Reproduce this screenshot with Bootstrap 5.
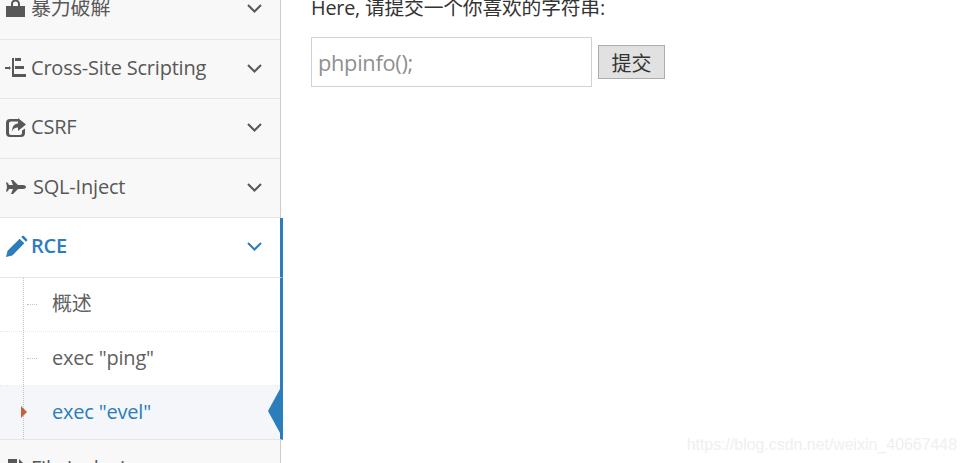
<!DOCTYPE html>
<html>
    <head>
        <meta charset="utf-8">
        <link href="https://cdn.jsdelivr.net/npm/bootstrap@5.3.1/dist/css/bootstrap.min.css" rel="stylesheet"/>
        <style>
            html, body { height: 100%; overflow: hidden; }
            body { font-family: "Open Sans", "Noto Sans CJK SC", sans-serif; color: #333; background: #fff; }
            .page-wrap { height: 463px; overflow: hidden; }
            .side-menu { width: 281px; height: 483px; background: #f8f8f8; border-right: 1px solid #ccc; flex-shrink: 0; margin-top: -20px; }
            .menu-head { height: 59.5px; border-bottom: 1px solid #e5e5e5; color: #585858; font-size: 20px; letter-spacing: -.2px; padding: 0 17px 1px 6px; }
            .menu-head span { margin-bottom: 1px; }
            .menu-head svg.ico { width: 20px; height: 20px; flex-shrink: 0; fill: #585858; margin-right: 5px; overflow: visible; }
            .menu-head svg.chev { width: 17px; height: 11px; fill: none; stroke: #585858; stroke-width: 2; margin-left: auto; }
            .open-head { background: #fff; color: #2b7dbc; font-weight: 600; width: 283px; border-right: 3px solid #2b7dbc; }
            .open-head svg.ico { fill: #2b7dbc; width: 21px; height: 21px; margin-right: 4px; }
            .open-head svg.chev { stroke: #2b7dbc; }
            .sub-menu { width: 283px; background: #fff; border-right: 3px solid #2b7dbc; border-bottom: 1px solid #e5e5e5; position: relative; }
            .sub-row { height: 54px; padding: 0 0 1px 52px; color: #616161; font-size: 20px; letter-spacing: -.2px; border-bottom: 1px dotted #e8e8e8; position: relative; }
            .sub-current { height: 53px; border-bottom: 0; background: #f4f6f9; color: #2b7dbc; padding-bottom: 0; }
            .tree-line { position: absolute; left: 23px; top: 0; bottom: 0; border-left: 1px dotted #c4c4c4; z-index: 1; }
            .tree-dash { position: absolute; left: 27px; top: 26px; width: 10px; border-top: 1px dotted #c4c4c4; }
            .tree-mark { position: absolute; left: 21px; top: 20px; border-left: 6px solid #c86139; border-top: 6px solid transparent; border-bottom: 6px solid transparent; z-index: 2; }
            .side-arrow { position: absolute; right: 0; top: 111px; border-right: 12px solid #2b7dbc; border-top: 22px solid transparent; border-bottom: 22px solid transparent; }
            .main-area { padding: 0 0 0 30px; margin-top: -6px; }
            .intro-line { font-size: 19.8px; letter-spacing: -.2px; line-height: 28px; margin: 0 0 15px; color: #333; }
            .text-box { width: 281px; height: 50px; border: 1px solid #d2d2d2; padding: 0 6px; font: 21.8px "Open Sans", sans-serif; letter-spacing: -.3px; outline: 0; }
            .text-box::placeholder { color: #8f8f8f; opacity: 1; }
            .send-btn { width: 67px; height: 34px; margin-left: 6px; margin-bottom: 8px; background: #e1e1e1; border: 1px solid #adadad; border-radius: 0; padding: 0; font: 20px "Noto Sans CJK SC", sans-serif; color: #333; }
            .water-mark { position: absolute; right: 9px; bottom: 9px; font: 15.9px "Liberation Sans", sans-serif; color: #efefef; }
        </style>
    </head>
    <body>
        <div class="page-wrap d-flex position-relative">
            <div class="side-menu">
                <div class="menu-head d-flex align-items-center">
                    <svg class="ico" viewBox="0 0 20 20"><path d="M0 7h19v11H0zM5 7V5a4.500 4.500 0 0 1 9 0v2h-2V5a2.500 2.500 0 0 0-5 0v2z"/></svg>
                    <span>暴力破解</span>
                    <svg class="chev" viewBox="0 0 17 11"><path d="M2 2l6.500 6.500L15 2"/></svg>
                </div>
                <div class="menu-head d-flex align-items-center">
                    <svg class="ico" viewBox="0 0 20 20"><path d="M-1 9h4V8l2 2-2 2v-1h-4zM6 0h2v19H6zM9 0h6v3H9zM9 8h9v3H9zM6 16h14v3H6z"/></svg>
                    <span>Cross-Site Scripting</span>
                    <svg class="chev" viewBox="0 0 17 11"><path d="M2 2l6.500 6.500L15 2"/></svg>
                </div>
                <div class="menu-head d-flex align-items-center">
                    <svg class="ico" viewBox="0 0 20 20"><path d="M4 1h9v2.500H5a2 2 0 0 0-2 2V15a2 2 0 0 0 2 2h9a2 2 0 0 0 2-2v-2.500l3-2V15a4 4 0 0 1-4 4H4a4 4 0 0 1-4-4V5a4 4 0 0 1 4-4z"/><path d="M12 0l8 6.500-8 6.500V9.500c-3 0-5 1-6 4 0-5 2-7.500 6-8z"/></svg>
                    <span>CSRF</span>
                    <svg class="chev" viewBox="0 0 17 11"><path d="M2 2l6.500 6.500L15 2"/></svg>
                </div>
                <div class="menu-head d-flex align-items-center">
                    <svg class="ico" style="margin-right:7px" viewBox="0 0 20 20"><path d="M0 5l2 1 1 2h4L5 3h2l5 5h5c2 0 3 1 3 2s-1 2-3 2h-5l-5 5H5l2-5H3l-1 2-2 1 1-5z"/></svg>
                    <span>SQL-Inject</span>
                    <svg class="chev" viewBox="0 0 17 11"><path d="M2 2l6.500 6.500L15 2"/></svg>
                </div>
                <div class="menu-head open-head d-flex align-items-center">
                    <svg class="ico" viewBox="0 0 20 20"><path d="M0 20l1.500-6L13 2.500 17.500 7 6 18.500zM14.500 1l1-1c.5-.3 1-.3 1.500 0l3 3c.3.500.3 1 0 1.500l-1 1z"/></svg>
                    <span>RCE</span>
                    <svg class="chev" viewBox="0 0 17 11"><path d="M2 2l6.500 6.500L15 2"/></svg>
                </div>
                <div class="sub-menu">
                    <div class="tree-line"></div>
                    <div class="sub-row d-flex align-items-center"><span class="tree-dash"></span>概述</div>
                    <div class="sub-row d-flex align-items-center"><span class="tree-dash"></span>exec "ping"</div>
                    <div class="sub-row sub-current d-flex align-items-center"><span class="tree-mark"></span>exec "evel"</div>
                    <span class="side-arrow"></span>
                </div>
                <div class="menu-head d-flex align-items-center">
                    <svg class="ico" viewBox="0 0 20 20"><path d="M2 1h9v7h7v12H2zM13 1l5 5h-5z"/></svg>
                    <span>File Inclusion</span>
                </div>
            </div>
            <div class="main-area flex-grow-1">
                <p class="intro-line">Here, 请提交一个你喜欢的字符串:</p>
                <form class="d-flex align-items-end">
                    <input class="text-box" type="text" placeholder="phpinfo();">
                    <button class="send-btn" type="button">提交</button>
                </form>
            </div>
            <div class="water-mark">https://blog.csdn.net/weixin_40667448</div>
        </div>
    </body>
</html>
